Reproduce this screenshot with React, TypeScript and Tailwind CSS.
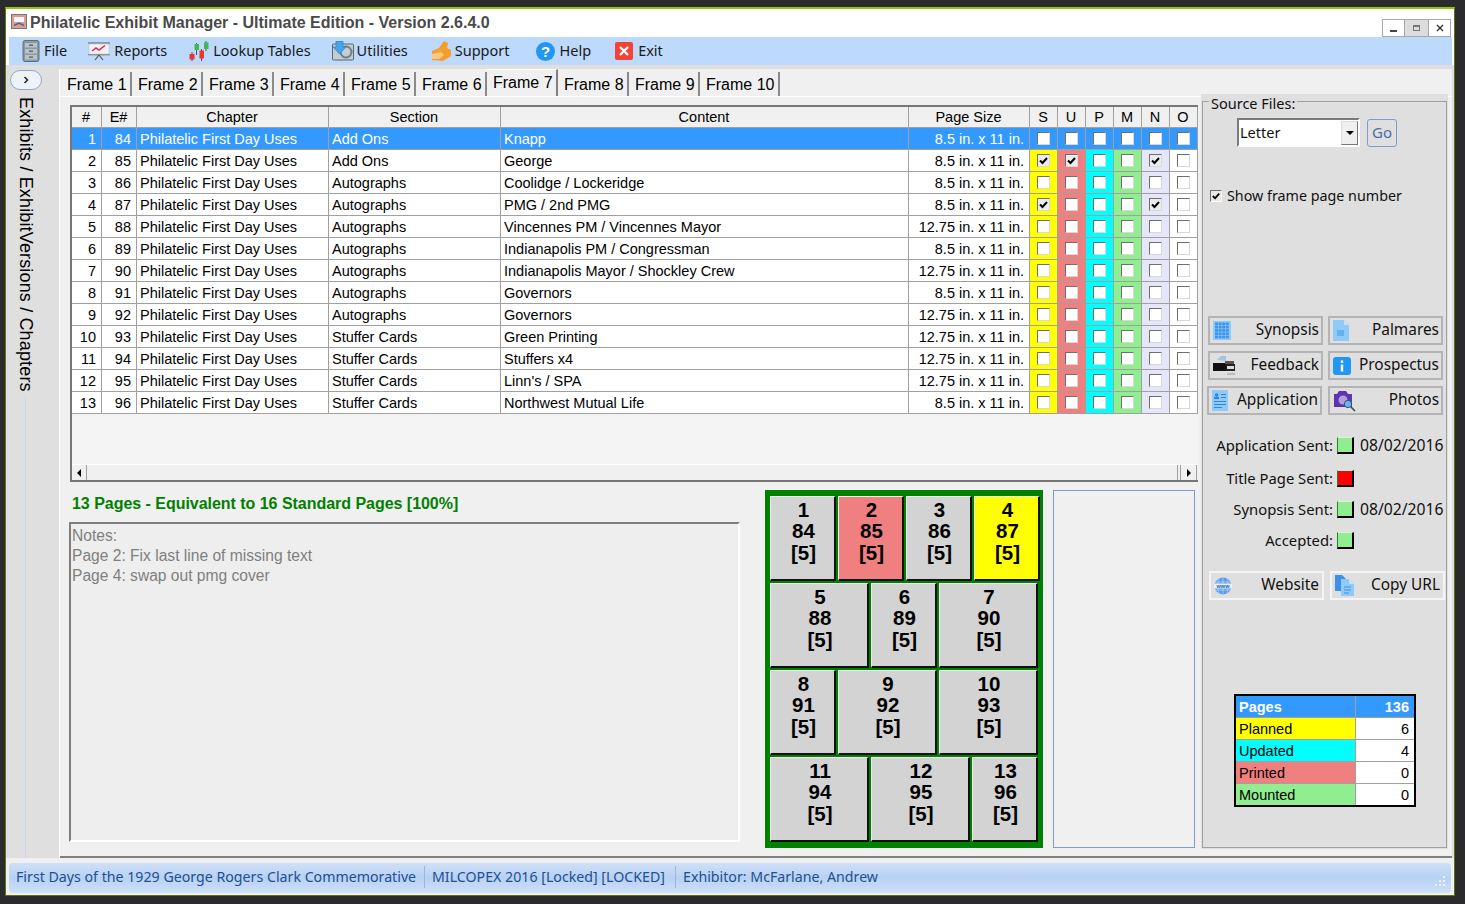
import type { ReactNode } from "react";

type Row = { n: number; e: number; chapter: string; section: string; content: string; size: string; checks: string };

const FIRST = "Philatelic First Day Uses";
const SM = "8.5 in. x 11 in.";
const LG = "12.75 in. x 11 in.";

const ROWS: Row[] = [
  { n: 1, e: 84, chapter: FIRST, section: "Add Ons", content: "Knapp", size: SM, checks: "" },
  { n: 2, e: 85, chapter: FIRST, section: "Add Ons", content: "George", size: SM, checks: "SUN" },
  { n: 3, e: 86, chapter: FIRST, section: "Autographs", content: "Coolidge / Lockeridge", size: SM, checks: "" },
  { n: 4, e: 87, chapter: FIRST, section: "Autographs", content: "PMG / 2nd PMG", size: SM, checks: "SN" },
  { n: 5, e: 88, chapter: FIRST, section: "Autographs", content: "Vincennes PM / Vincennes Mayor", size: LG, checks: "" },
  { n: 6, e: 89, chapter: FIRST, section: "Autographs", content: "Indianapolis PM / Congressman", size: SM, checks: "" },
  { n: 7, e: 90, chapter: FIRST, section: "Autographs", content: "Indianapolis Mayor / Shockley Crew", size: LG, checks: "" },
  { n: 8, e: 91, chapter: FIRST, section: "Autographs", content: "Governors", size: SM, checks: "" },
  { n: 9, e: 92, chapter: FIRST, section: "Autographs", content: "Governors", size: LG, checks: "" },
  { n: 10, e: 93, chapter: FIRST, section: "Stuffer Cards", content: "Green Printing", size: LG, checks: "" },
  { n: 11, e: 94, chapter: FIRST, section: "Stuffer Cards", content: "Stuffers x4", size: LG, checks: "" },
  { n: 12, e: 95, chapter: FIRST, section: "Stuffer Cards", content: "Linn's / SPA", size: LG, checks: "" },
  { n: 13, e: 96, chapter: FIRST, section: "Stuffer Cards", content: "Northwest Mutual Life", size: SM, checks: "" },
];

const FLAGS = [
  { key: "S", bg: "bg-[#ffff00]" },
  { key: "U", bg: "bg-[#f08080]" },
  { key: "P", bg: "bg-[#00ffff]" },
  { key: "M", bg: "bg-[#90ee90]" },
  { key: "N", bg: "bg-[#e6e6fa]" },
  { key: "O", bg: "bg-white" },
];

const TABS = ["Frame 1", "Frame 2", "Frame 3", "Frame 4", "Frame 5", "Frame 6", "Frame 7", "Frame 8", "Frame 9", "Frame 10"];

const FRAME_ROWS = [
  [{ p: 1, e: 84, w: "w-[66px]" }, { p: 2, e: 85, w: "w-[66px]", bg: "bg-[#f08080]" }, { p: 3, e: 86, w: "w-[66px]" }, { p: 4, e: 87, w: "w-[66px]", bg: "bg-[#ffff00]" }],
  [{ p: 5, e: 88, w: "w-[99px]" }, { p: 6, e: 89, w: "w-[66px]" }, { p: 7, e: 90, w: "w-[99px]" }],
  [{ p: 8, e: 91, w: "w-[66px]" }, { p: 9, e: 92, w: "w-[99px]" }, { p: 10, e: 93, w: "w-[99px]" }],
  [{ p: 11, e: 94, w: "w-[99px]" }, { p: 12, e: 95, w: "w-[99px]" }, { p: 13, e: 96, w: "w-[66px]" }],
];

function Check({ on }: { on?: boolean }) {
  return (
    <span className={`flex h-[13px] w-[13px] items-center justify-center border border-t-[#6f6f6f] border-l-[#6f6f6f] border-r-[#d8d8d8] border-b-[#d8d8d8] ${on ? "bg-[#ececec]" : "bg-white"}`}>
      {on && (
        <svg viewBox="0 0 11 11" className="h-[11px] w-[11px]">
          <path d="M2 5.500 L4.500 8 L9 3" fill="none" stroke="#000" strokeWidth="2" />
        </svg>
      )}
    </span>
  );
}

function FileIcon() {
  return (
    <svg viewBox="0 0 18 22" className="h-[22px] w-[18px]">
      <rect x="1" y="0.500" width="16" height="21" rx="2" fill="#8b9ba3" stroke="#5f7079" />
      <rect x="3" y="3" width="12" height="4.500" fill="#b7c3c9" />
      <rect x="3" y="9" width="12" height="4.500" fill="#b7c3c9" />
      <rect x="3" y="15" width="12" height="4.500" fill="#b7c3c9" />
      <rect x="7" y="4.500" width="4" height="1.300" fill="#4f5d64" />
      <rect x="7" y="10.500" width="4" height="1.300" fill="#4f5d64" />
      <rect x="7" y="16.500" width="4" height="1.300" fill="#4f5d64" />
    </svg>
  );
}

function ReportsIcon() {
  return (
    <svg viewBox="0 0 22 20" className="h-[20px] w-[22px]">
      <rect x="0" y="1" width="22" height="2" fill="#8d9a9f" />
      <rect x="1" y="3" width="20" height="10" fill="#f2f2f2" stroke="#b8c0c4" strokeWidth="0.600" />
      <rect x="0" y="13" width="22" height="1.500" fill="#8d9a9f" />
      <path d="M4 10 L8 7 L11 9 L17 4.500" fill="none" stroke="#e0245e" strokeWidth="1.500" />
      <path d="M11 14 L7 19 M11 14 L15 19" stroke="#555" strokeWidth="1.200" />
    </svg>
  );
}

function LookupIcon() {
  return (
    <svg viewBox="0 0 20 20" className="h-[20px] w-[20px]">
      <path d="M3 11v9M7.500 2v12M12.500 8v12M17 0v10" stroke="#333" strokeWidth="0.800" />
      <rect x="0.500" y="13" width="5" height="5.500" fill="#ee3333" />
      <rect x="5.500" y="3" width="4.500" height="6" fill="#3fb950" />
      <rect x="10.500" y="9.500" width="4.500" height="8" fill="#ee3333" />
      <rect x="15" y="1.500" width="4.500" height="6.500" fill="#3fb950" />
    </svg>
  );
}

function UtilitiesIcon() {
  return (
    <svg viewBox="0 0 22 20" className="h-[20px] w-[22px]">
      <rect x="0.500" y="3" width="21" height="16" rx="1" fill="#c3ccd2" stroke="#5b6870" />
      <circle cx="14" cy="11" r="5.500" fill="none" stroke="#6f7d85" strokeWidth="2" />
      <path d="M4 0 H11 V6 H14 L7.500 13 L1 6 H4 Z" fill="#4aa3ea" stroke="#2a78bb" strokeWidth="0.600" />
    </svg>
  );
}

function SupportIcon() {
  return (
    <svg viewBox="0 0 19 20" className="h-[20px] w-[19px]">
      <path d="M0 10 L7 7 L12 0 L16 2 L15 7 L19 9 L19 15 L11 20 L0 19 Z" fill="#f59e2c" />
      <path d="M0 13 L9 11 L12 14 L7 18 L0 18 Z" fill="#fbc987" />
    </svg>
  );
}

function HelpIcon() {
  return (
    <svg viewBox="0 0 19 19" className="h-[19px] w-[19px]">
      <circle cx="9.500" cy="9.500" r="9.500" fill="#2196f3" />
      <text x="9.500" y="15" textAnchor="middle" fontSize="15" fontWeight="700" fontFamily="Liberation Sans" fill="#fff">?</text>
    </svg>
  );
}

function ExitIcon() {
  return (
    <svg viewBox="0 0 18 18" className="h-[18px] w-[18px]">
      <rect width="18" height="18" rx="2" fill="#f44336" />
      <path d="M5 5 L13 13 M13 5 L5 13" stroke="#fff" strokeWidth="2.400" />
    </svg>
  );
}

function SynopsisIcon() {
  const cells = [];
  for (let y = 0; y < 5; y++) for (let x = 0; x < 4; x++) cells.push(<rect key={`${x}-${y}`} x={2 + x * 3.600} y={1.500 + y * 3.300} width="3" height="2.700" fill="#3d96ee" />);
  return (
    <svg viewBox="0 0 18 19" className="h-[19px] w-[18px]">
      <rect width="18" height="19" fill="#90caf9" />
      {cells}
    </svg>
  );
}

function PalmaresIcon() {
  return (
    <svg viewBox="0 0 16 21" className="h-[21px] w-[16px]">
      <path d="M0 0 H11 L16 5 V21 H0 Z" fill="#90caf9" />
      <path d="M11 0 L16 5 H11 Z" fill="#c5e2fb" />
      <path d="M4 10 H11 V16 H4 Z" fill="#64b0f3" />
    </svg>
  );
}

function FeedbackIcon() {
  return (
    <svg viewBox="0 0 22 20" className="h-[20px] w-[22px]">
      <path d="M4 4 L8 0 L13 0 L13 5 Z" fill="#a6c5dc" />
      <rect x="0" y="7" width="13" height="8" fill="#111" />
      <rect x="12" y="5" width="9" height="3" fill="#555" />
      <rect x="13" y="8" width="9" height="7" fill="#222" />
      <rect x="14" y="10" width="7" height="3" fill="#ddd" />
      <rect x="14" y="17" width="8" height="2" fill="#bbb" />
    </svg>
  );
}

function ProspectusIcon() {
  return (
    <svg viewBox="0 0 18 18" className="h-[18px] w-[18px]">
      <rect width="18" height="18" rx="3" fill="#2196f3" />
      <rect x="7.800" y="3.500" width="2.400" height="2.400" fill="#fff" />
      <rect x="7.800" y="7.500" width="2.400" height="7" fill="#fff" />
    </svg>
  );
}

function ApplicationIcon() {
  return (
    <svg viewBox="0 0 16 21" className="h-[21px] w-[16px]">
      <rect width="16" height="21" fill="#90caf9" />
      <circle cx="4.500" cy="5" r="1.800" fill="#2f86e0" />
      <rect x="2" y="7" width="5" height="2" fill="#2f86e0" />
      <path d="M9 4.500 H14 M9 7.500 H14 M2 11.500 H14 M2 14.500 H14 M2 17.500 H10" stroke="#2f86e0" strokeWidth="1.200" />
    </svg>
  );
}

function PhotosIcon() {
  return (
    <svg viewBox="0 0 23 23" className="h-[23px] w-[23px]">
      <path d="M1 5 H4 L6 2 H13 L15 5 H19 V18 H1 Z" fill="#5e35b1" />
      <circle cx="10" cy="11" r="4.500" fill="#b39ddb" />
      <circle cx="15" cy="15" r="3.700" fill="#64b5f6" stroke="#37474f" strokeWidth="0.900" />
      <path d="M18 18 L22 22" stroke="#37474f" strokeWidth="1.600" />
    </svg>
  );
}

function WebsiteIcon() {
  return (
    <svg viewBox="0 0 18 18" className="h-[18px] w-[18px]">
      <circle cx="9" cy="9" r="8.500" fill="#5a9be6" />
      <path d="M1 5 H17 M1 13 H17 M9 0.500 V17.500 M5.500 1.500 C3 6 3 12 5.500 16.500 M12.500 1.500 C15 6 15 12 12.500 16.500" stroke="#bcd9f7" strokeWidth="0.700" fill="none" />
      <rect x="0" y="6.500" width="18" height="5" fill="#e6f0fb" />
      <text x="9" y="11" textAnchor="middle" fontSize="5.500" fontWeight="700" fontFamily="Liberation Sans" fill="#1c5fae">www</text>
    </svg>
  );
}

function CopyIcon() {
  return (
    <svg viewBox="0 0 19 21" className="h-[21px] w-[19px]">
      <path d="M0 0 H7 L11 4 V16 H0 Z" fill="#3d8fe8" />
      <path d="M6 4 H14 L19 9 V21 H6 Z" fill="#90caf9" />
      <path d="M14 4 L19 9 H14 Z" fill="#c5e2fb" />
      <path d="M9 12 H16 M9 15 H16 M9 18 H14" stroke="#3d8fe8" strokeWidth="1" />
    </svg>
  );
}

function MenuItem({ icon, label, className }: { icon: ReactNode; label: string; className: string }) {
  return (
    <div className={`flex items-center ${className}`}>
      {icon}
      <span className="text-[14.500px] text-[#1a1a1a] whitespace-nowrap">{label}</span>
    </div>
  );
}

function SideButton({ icon, label, className = "", light }: { icon: ReactNode; label: string; className?: string; light?: boolean }) {
  return (
    <button className={`flex h-[29px] w-[115px] items-center justify-between pl-[3px] text-[15.400px] text-[#111] border-2 ${light ? "border-[#f4f4f4] pr-[3px]" : "border-[#b4b4b4] pr-[2px]"} ${className}`}>
      {icon}
      <span className="whitespace-nowrap pb-px">{label}</span>
    </button>
  );
}

function SentRow({ label, date, color, className }: { label: string; date?: string; color: string; className: string }) {
  return (
    <div className={`flex h-[17px] items-center ${className}`}>
      <span className="w-[130px] text-right text-[14.800px] text-[#111] whitespace-nowrap">{label}</span>
      <span className={`ml-[4px] h-[17px] w-[17px] border border-t-[#d8f5d8] border-l-[#2e7d32] border-r-black border-b-black border-r-2 border-b-2 ${color}`} />
      {date && <span className="ml-[6px] text-[15.700px] text-[#111]">{date}</span>}
    </div>
  );
}

function TallyRow({ label, value, color }: { label: string; value: number; color: string }) {
  return (
    <div className="flex h-[22px] items-center border-t border-[#a0a0a0] text-[14.500px] text-black">
      <span className={`flex h-full w-[120px] items-center border-r border-[#a0a0a0] pl-[3px] pt-[2px] ${color}`}>{label}</span>
      <span className="flex h-full flex-1 items-center justify-end bg-white pr-[5px] pt-[2px]">{value}</span>
    </div>
  );
}

export default function App() {
  return (
    <div className="h-[904px] w-[1465px] overflow-hidden bg-[#2b2b2d] pl-[5px] pt-[7px] font-['Liberation_Sans',sans-serif]">
      <div className="flex h-[889px] w-[1450px] flex-col border border-t-2 border-[#5f7410] border-t-[#9bc400] bg-white">
        {/* title bar */}
        <div className="flex h-[28px] shrink-0 items-start">
          <svg viewBox="0 0 16 15" className="ml-[5px] mt-[5px] h-[15px] w-[16px]">
            <rect x="0.500" y="0.500" width="15" height="14" fill="#e39a90" stroke="#777" />
            <rect x="3" y="3" width="10" height="5" fill="#f7f7f7" />
            <path d="M3 11.500 L8 9 L13 11.500" stroke="#3a6ea5" strokeWidth="1.500" fill="none" />
          </svg>
          <span className="ml-[3px] mt-[4px] text-[16px] font-bold leading-[20px] text-[#4a4a4a]">Philatelic Exhibit Manager - Ultimate Edition - Version 2.6.4.0</span>
          <div className="ml-auto mr-[3px] mt-[10px] flex h-[18px]">
            <div className="flex w-[23px] items-center justify-center border border-[#a8a8a8] bg-white pt-[6px]"><span className="h-[2px] w-[7px] bg-[#444]" /></div>
            <div className="flex w-[23px] items-center justify-center border-y border-[#a8a8a8] bg-[#dcdcdc]"><span className="h-[6px] w-[7px] border border-t-2 border-[#777]" /></div>
            <div className="flex w-[23px] items-center justify-center border border-[#a8a8a8] bg-white">
              <svg viewBox="0 0 8 8" className="h-[8px] w-[8px]"><path d="M1 1 L7 7 M7 1 L1 7" stroke="#333" strokeWidth="1.400" /></svg>
            </div>
          </div>
        </div>

        {/* menu */}
        <div className="ml-[3px] mr-[2px] flex h-[28px] shrink-0 items-center bg-[#bdd9fb] font-['Noto_Sans',sans-serif]">
          <MenuItem className="ml-[13px] gap-[4px]" icon={<FileIcon />} label="File" />
          <MenuItem className="ml-[21px] gap-[4px]" icon={<ReportsIcon />} label="Reports" />
          <MenuItem className="ml-[22px] gap-[4px]" icon={<LookupIcon />} label="Lookup Tables" />
          <MenuItem className="ml-[21px] gap-[3px]" icon={<UtilitiesIcon />} label="Utilities" />
          <MenuItem className="ml-[24px] gap-[4px]" icon={<SupportIcon />} label="Support" />
          <MenuItem className="ml-[26px] gap-[5px]" icon={<HelpIcon />} label="Help" />
          <MenuItem className="ml-[24px] gap-[5px]" icon={<ExitIcon />} label="Exit" />
        </div>

        <div className="flex flex-1 flex-col bg-[#f0f0f0]">
          <div className="flex h-[793px] bg-[#dfdfdf] pt-[4px]">
            {/* collapsed side panel */}
            <div className="flex w-[53px] shrink-0">
              <div className="flex w-[39px] flex-col items-center">
                <button className="mt-[1px] flex h-[20px] w-[32px] items-center justify-center rounded-full border border-[#8fa9c9] bg-[#eef3f9]">
                  <svg viewBox="0 0 6 8" className="h-[8px] w-[6px]"><path d="M1.500 1 L4.500 4 L1.500 7" fill="none" stroke="#222" strokeWidth="1.500" /></svg>
                </button>
                <span className="mt-[7px] text-[18px] leading-[18px] tracking-[0.150px] text-black whitespace-nowrap [writing-mode:vertical-rl]">Exhibits / ExhibitVersions / Chapters</span>
                <span className="mt-[4px] w-px flex-1 bg-[#c4d8f2]" />
              </div>
            </div>

            {/* main */}
            <div className="mr-[2px] flex flex-1 flex-col border-l border-white bg-[#f0f0f0]">
              <div className="flex h-[27px] shrink-0 items-end pl-px text-[16px] text-black">
                {TABS.map((t) => (
                  <div
                    key={t}
                    className={`flex whitespace-nowrap border-r-2 pl-[6px] ${t === "Frame 10" ? "w-[80px]" : "w-[71px]"} ${t === "Frame 7"
                      ? "h-[27px] items-start border-t border-[#808080] border-t-white pt-px"
                      : "h-[24px] items-center border-[#8a8a8a] pt-[2px]"}`}
                  >
                    {t}
                  </div>
                ))}
              </div>
              <div className="flex flex-1 border-t border-b-2 border-t-white border-b-[#808080]">
                <div className="ml-[10px] flex w-[1128px] flex-col pt-[8px]">
                  {/* page table */}
                  <div className="flex h-[377px] flex-col border-2 border-r-0 border-[#777] bg-[#f4f4f4]">
                    <table className="w-[1126px] table-fixed border-separate border-spacing-0 text-[14.500px] leading-[20px] text-black">
                      <colgroup>
                        <col className="w-[30px]" />
                        <col className="w-[35px]" />
                        <col className="w-[192px]" />
                        <col className="w-[172px]" />
                        <col className="w-[408px]" />
                        <col className="w-[121px]" />
                        {FLAGS.map((f) => <col key={f.key} className="w-[28px]" />)}
                      </colgroup>
                      <thead>
                        <tr className="h-[21px] bg-[#f0f0f0]">
                          {["#", "E#", "Chapter", "Section", "Content", "Page Size", "S", "U", "P", "M", "N", "O"].map((h) => (
                            <th key={h} className="border-b border-r border-[#a0a0a0] p-0 pr-px text-center font-normal">{h}</th>
                          ))}
                        </tr>
                      </thead>
                      <tbody>
                        {ROWS.map((r, i) => {
                          const sel = i === 0;
                          const cell = `border-b border-r border-[#a0a0a0] p-0 whitespace-nowrap ${sel ? "bg-[#3399ff] text-white" : "bg-white text-black"}`;
                          return (
                            <tr key={r.n} className="h-[22px]">
                              <td className={`${cell} pr-[5px] text-right`}>{r.n}</td>
                              <td className={`${cell} pr-[5px] text-right`}>{r.e}</td>
                              <td className={`${cell} pl-[3px]`}>{r.chapter}</td>
                              <td className={`${cell} pl-[3px]`}>{r.section}</td>
                              <td className={`${cell} pl-[3px]`}>{r.content}</td>
                              <td className={`${cell} pr-[5px] text-right`}>{r.size}</td>
                              {FLAGS.map((f) => (
                                <td key={f.key} className={`border-b border-r border-[#a0a0a0] p-0 ${sel ? "bg-[#3399ff]" : f.bg}`}>
                                  <div className="flex justify-center"><Check on={r.checks.includes(f.key)} /></div>
                                </td>
                              ))}
                            </tr>
                          );
                        })}
                      </tbody>
                    </table>
                    <div className="mt-auto flex h-[16px] border-t border-white bg-[#f0f0f0]">
                      <div className="flex w-[15px] items-center justify-center border-r border-[#a0a0a0]">
                        <span className="h-0 w-0 border-y-4 border-r-4 border-y-transparent border-r-black" />
                      </div>
                      <div className="flex-1 border-r border-[#a0a0a0]" />
                      <div className="ml-[2px] mr-px flex w-[17px] items-center justify-center border-x border-[#a0a0a0]">
                        <span className="h-0 w-0 border-y-4 border-l-4 border-y-transparent border-l-black" />
                      </div>
                    </div>
                  </div>

                  <div className="flex flex-1">
                    <div className="-ml-px flex w-[671px] flex-col">
                      <div className="ml-[3px] mt-[12px] text-[16px] font-bold leading-[20px] tracking-[-0.030px] text-[#008000]">13 Pages - Equivalent to 16 Standard Pages [100%]</div>
                      <div className="mt-[8px] h-[320px] border-2 border-[#7f7f7f] border-b-white border-r-white bg-[#eeeeee] pl-px text-[15.600px] leading-[20px] text-[#7f7f7f]">
                        <p className="pt-[2px]">Notes:</p>
                        <p>Page 2: Fix last line of missing text</p>
                        <p>Page 4: swap out pmg cover</p>
                      </div>
                    </div>

                    {/* frame layout */}
                    <div className="ml-[25px] mt-[8px] flex h-[358px] w-[278px] flex-col gap-[2px] bg-[#008000] pl-[5px] pt-[6px]">
                      {FRAME_ROWS.map((row, i) => (
                        <div key={i} className="flex gap-[2px]">
                          {row.map((c) => (
                            <div
                              key={c.p}
                              className={`h-[85px] border border-b-2 border-r-2 border-b-[#111] border-l-[#ededed] border-r-[#111] border-t-[#ededed] pl-[2px] pt-[2px] text-center text-[20.500px] font-bold leading-[21.300px] text-black ${c.w} ${"bg" in c ? c.bg : "bg-[#d3d3d3]"}`}
                            >
                              <div>{c.p}</div>
                              <div>{c.e}</div>
                              <div>[5]</div>
                            </div>
                          ))}
                        </div>
                      ))}
                    </div>
                    <div className="ml-[10px] mt-[8px] h-[358px] w-[142px] border border-[#7f9dc9] bg-[#f0f0f0]" />
                  </div>
                </div>

                {/* right panel */}
                <div className="-mt-[3px] ml-[3px] h-[755px] w-[247px] bg-[#dfdfdf] px-px pt-[7px] font-['Noto_Sans',sans-serif]">
                  <div className="relative h-[747px] border border-[#a0a0a0]">
                    <span className="absolute -top-[8px] left-[6px] bg-[#dfdfdf] px-[2px] text-[14.500px] leading-[18px] text-[#111]">Source Files:</span>
                    <div className="ml-[34px] mt-[16px] flex h-[29px] items-center">
                      <div className="flex h-[29px] w-[123px] items-center border-2 border-[#7a7a7a] border-b-white border-r-white bg-white pl-px">
                        <span className="flex-1 text-[14.500px] text-[#111]">Letter</span>
                        <span className="flex h-[24px] w-[17px] items-center justify-center border border-[#777] border-l-[#ddd] border-t-[#ddd] bg-[#efefef]">
                          <span className="h-0 w-0 border-x-[4px] border-t-[4px] border-x-transparent border-t-black" />
                        </span>
                      </div>
                      <button className="ml-[7px] h-[28px] w-[30px] rounded-[3px] border border-[#7f9dc9] text-[15px] text-[#4a6ea5]">Go</button>
                    </div>
                    <div className="ml-[7px] mt-[39px] flex h-[20px] items-center">
                      <span className="flex h-[12px] w-[12px] items-center justify-center border border-b-white border-l-[#6f6f6f] border-r-white border-t-[#6f6f6f] bg-[#e8e8e8]">
                        <svg viewBox="0 0 11 11" className="h-[10px] w-[10px]"><path d="M2 5.500 L4.500 8 L9 3" fill="none" stroke="#000" strokeWidth="2" /></svg>
                      </span>
                      <span className="ml-[5px] text-[14.300px] text-[#111]">Show frame page number</span>
                    </div>

                    <div className="ml-[5px] mt-[110px] flex gap-[5px]">
                      <SideButton icon={<SynopsisIcon />} label="Synopsis" />
                      <SideButton icon={<PalmaresIcon />} label="Palmares" />
                    </div>
                    <div className="ml-[5px] mt-[6px] flex gap-[5px]">
                      <SideButton icon={<FeedbackIcon />} label="Feedback" />
                      <SideButton icon={<ProspectusIcon />} label="Prospectus" />
                    </div>
                    <div className="ml-[4px] mt-[6px] flex gap-[6px]">
                      <SideButton icon={<ApplicationIcon />} label="Application" />
                      <SideButton icon={<PhotosIcon />} label="Photos" />
                    </div>

                    <SentRow className="mt-[22px]" label="Application Sent:" color="bg-[#90ee90]" date="08/02/2016" />
                    <SentRow className="mt-[16px]" label="Title Page Sent:" color="bg-[#ff0000]" />
                    <SentRow className="mt-[14px]" label="Synopsis Sent:" color="bg-[#90ee90]" date="08/02/2016" />
                    <SentRow className="mt-[14px]" label="Accepted:" color="bg-[#90ee90]" />

                    <div className="ml-[6px] mt-[22px] flex gap-[6px]">
                      <SideButton light icon={<WebsiteIcon />} label="Website" />
                      <SideButton light icon={<CopyIcon />} label="Copy URL" />
                    </div>

                    <div className="ml-[31px] mt-[94px] w-[182px] border-2 border-black font-['Liberation_Sans',sans-serif]">
                      <div className="flex h-[21px] items-center bg-[#3399ff] text-[14.500px] font-bold text-white">
                        <span className="flex h-full w-[120px] items-center border-r border-[#a0a0a0] pl-[3px] pt-[2px]">Pages</span>
                        <span className="flex-1 pr-[5px] pt-[2px] text-right">136</span>
                      </div>
                      <TallyRow label="Planned" value={6} color="bg-[#ffff00]" />
                      <TallyRow label="Updated" value={4} color="bg-[#00ffff]" />
                      <TallyRow label="Printed" value={0} color="bg-[#f08080]" />
                      <TallyRow label="Mounted" value={0} color="bg-[#90ee90]" />
                    </div>
                  </div>
                </div>
              </div>
            </div>
          </div>

          {/* status bar */}
          <div className="mx-[3px] mt-[5px] flex h-[30px] items-center rounded-[4px] bg-gradient-to-b from-[#cfe0f8] via-[#b7d1f4] to-[#cfe0f9] pb-[2px] font-['Noto_Sans',sans-serif] text-[14.200px] text-[#1f4f8f]">
            <span className="ml-[7px] w-[408px] whitespace-nowrap">First Days of the 1929 George Rogers Clark Commemorative</span>
            <span className="h-[22px] w-px bg-[#9db7da]" />
            <span className="ml-[7px] w-[243px] whitespace-nowrap">MILCOPEX 2016 [Locked] [LOCKED]</span>
            <span className="h-[22px] w-px bg-[#9db7da]" />
            <span className="ml-[7px] whitespace-nowrap">Exhibitor: McFarlane, Andrew</span>
            <svg viewBox="0 0 11 11" className="ml-auto mr-[6px] mt-[6px] h-[11px] w-[11px]">
              <path d="M9 1h2v2H9zM5 5h2v2H5zM9 5h2v2H9zM1 9h2v2H1zM5 9h2v2H5zM9 9h2v2H9z" fill="#eef4fc" />
            </svg>
          </div>
        </div>
      </div>
    </div>
  );
}
